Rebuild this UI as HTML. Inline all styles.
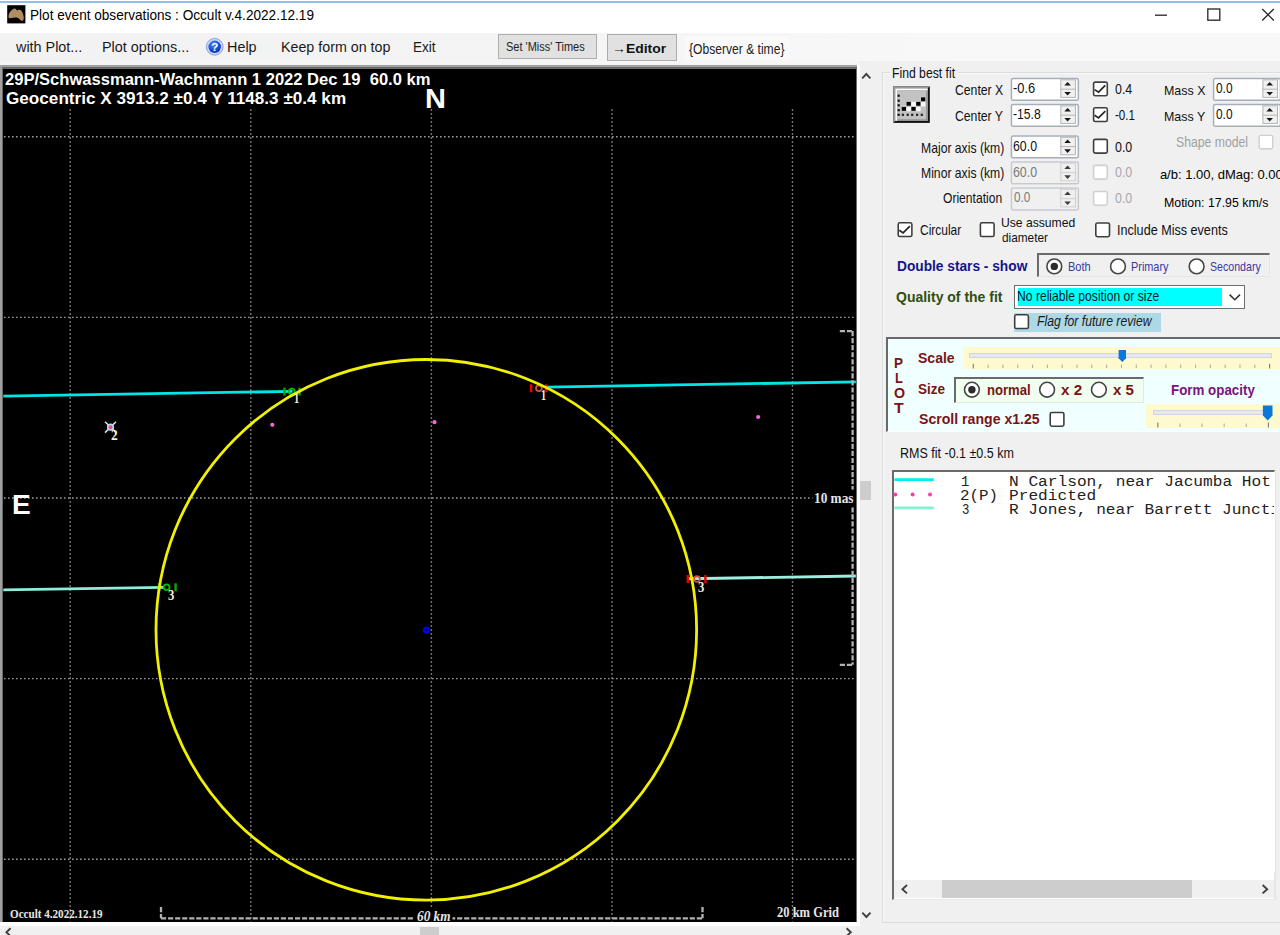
<!DOCTYPE html>
<html lang="en">
<head>
<meta charset="utf-8">
<title>Plot event observations : Occult v.4.2022.12.19</title>
<style>
html,body{margin:0;padding:0;width:1280px;height:935px;overflow:hidden;background:#f0f0f0}
#app{width:1280px;height:935px;overflow:hidden;position:relative;background:#f0f0f0;font-family:"Liberation Sans",sans-serif}
.a{position:absolute;box-sizing:border-box}
.t{position:absolute;white-space:pre;transform-origin:0 0;display:block}
svg{position:absolute;left:0;top:0;overflow:hidden}
.btn{background:#e1e1e1;border:1px solid #adadad}
.spin{background:#fff;border-radius:2px}
.spin.dis{background:#f0f0f0}
.cb{width:15.3px;height:15.3px;background:#fff;border-radius:2px}
.rd{width:15.6px;height:15.6px;border-radius:50%;background:#fff}
.sunk{border-top:2px solid #6a6a6a;border-left:2px solid #6a6a6a;border-right:1px solid #e6e6e6;border-bottom:1px solid #e6e6e6}
</style>
</head>
<body>
<div id="app">
<!-- title bar -->
<div class="a" id="titlebar" style="left:0;top:0;width:1280px;height:33px;background:#fff"></div>
<div class="a" style="left:0;top:1px;width:1280px;height:2px;background:#97bbeb"></div>
<!-- menu bar -->
<div class="a" id="menubar" style="left:0;top:33px;width:1280px;height:28.2px;background:linear-gradient(to right,#f2f2f2 0%,#f4f4f4 40%,#f8f8f8 75%,#f8f8f8 100%)"></div>
<div class="a" style="left:0;top:61.4px;width:859px;height:3.6px;background:#f5f5f5"></div>
<div class="a" style="left:685px;top:36px;width:105px;height:24px;background:#f9f9f9"></div>
<div class="a btn" style="left:498px;top:34.2px;width:98.6px;height:24.4px;border-width:1.3px"></div>
<div class="a btn" style="left:607.4px;top:34.2px;width:69.4px;height:27px;border-width:1.3px"></div>
<!-- plot panel frame -->
<div class="a" id="plotframe" style="left:0;top:65px;width:860px;height:860.5px;background:#fff"></div>
<div class="a" style="left:0;top:65px;width:857px;height:857px;background:#a0a0a0"></div>
<div class="a" style="left:2px;top:67px;width:855px;height:855px;background:#6a6a6a"></div>
<div class="a" style="left:3.3px;top:68.7px;width:852.5px;height:852.9px;background:#000"></div>
<!-- scrollbars of plot -->
<div class="a" style="left:860.3px;top:481.2px;width:11.2px;height:19px;background:#cdcdcd"></div>
<div class="a" style="left:419.5px;top:926.8px;width:19.4px;height:10px;background:#cdcdcd"></div>
<!-- right panel boxes -->
<div class="a" id="groupbox" style="left:882.3px;top:72.2px;width:420px;height:851px;border:1px solid #dcdcdc;box-shadow:inset 1px 1px 0 #f8f8f8"></div>
<div class="a" style="left:890px;top:66px;width:68px;height:14px;background:#f0f0f0"></div>
<!-- spinners -->
<div class="a spin" style="left:1010.7px;top:78px;width:68px;height:22.6px"></div>
<div class="a spin" style="left:1010.7px;top:104px;width:68px;height:22.6px"></div>
<div class="a spin" style="left:1010.7px;top:135.3px;width:68px;height:23px"></div>
<div class="a spin dis" style="left:1010.7px;top:161.3px;width:68px;height:23px"></div>
<div class="a spin dis" style="left:1010.7px;top:187.4px;width:68px;height:23px"></div>
<div class="a spin" style="left:1212.8px;top:78px;width:68px;height:22.6px"></div>
<div class="a spin" style="left:1212.8px;top:104px;width:68px;height:22.6px"></div>
<!-- checkboxes -->
<div class="a cb" style="left:1092.8px;top:81.3px"></div>
<div class="a cb" style="left:1092.8px;top:107px"></div>
<div class="a cb" style="left:1092.8px;top:138.6px"></div>
<div class="a cb dis" style="left:1092.8px;top:164.6px"></div>
<div class="a cb dis" style="left:1092.8px;top:190.7px"></div>
<div class="a cb dis" style="left:1258.3px;top:134.4px"></div>
<div class="a cb" style="left:897.4px;top:222px"></div>
<div class="a cb" style="left:979.6px;top:222px"></div>
<div class="a cb" style="left:1095px;top:222.2px"></div>
<!-- double stars radio group -->
<div class="a sunk" style="left:1036.9px;top:253.1px;width:233.3px;height:24px;background:#f0f0f0"></div>
<div class="a rd on" style="left:1046.5px;top:258.6px"></div>
<div class="a rd" style="left:1110.2px;top:258.6px"></div>
<div class="a rd" style="left:1188.8px;top:258.6px"></div>
<!-- combobox -->
<div class="a" style="left:1013.9px;top:284.7px;width:231.4px;height:24.3px;background:#fff;border:1.2px solid #6e6e6e"></div>
<div class="a" style="left:1017.6px;top:288.4px;width:204.4px;height:17.3px;background:#00ffff"></div>
<!-- flag -->
<div class="a" style="left:1013.9px;top:312.8px;width:146.8px;height:19.7px;background:#add8e6"></div>
<div class="a cb" style="left:1013.9px;top:314px"></div>
<!-- PLOT panel -->
<div class="a" style="left:885.6px;top:337.2px;width:400px;height:95px;background:#f0ffff;border-top:2px solid #6a6a6a;border-left:2px solid #6a6a6a;border-bottom:1.4px solid #fff"></div>
<div class="a" style="left:963.4px;top:346.8px;width:320px;height:22.2px;background:#fffacd"></div>
<div class="a" style="left:969.3px;top:352.9px;width:303.2px;height:4.7px;background:#e6e8f0;border:1px solid #d2d4de"></div>
<div class="a sunk" style="left:953.5px;top:377px;width:190.7px;height:25.6px;background:#f0fff0"></div>
<div class="a rd on" style="left:964.1px;top:381.9px"></div>
<div class="a rd" style="left:1039.3px;top:381.9px"></div>
<div class="a rd" style="left:1091.1px;top:381.9px"></div>
<div class="a" style="left:1145.8px;top:403.5px;width:140px;height:24.3px;background:#fffacd"></div>
<div class="a" style="left:1152.7px;top:410.2px;width:117.5px;height:4.8px;background:#e6e8f0;border:1px solid #d2d4de"></div>
<div class="a cb" style="left:1049.4px;top:411.7px"></div>
<!-- list box -->
<div class="a sunk" id="list" style="left:892.4px;top:469.6px;width:383px;height:430.3px;background:#fff"></div>
<div class="a" style="left:894.4px;top:880.3px;width:380px;height:17.6px;background:#f0f0f0"></div>
<div class="a" style="left:942.2px;top:880.3px;width:250.3px;height:17.6px;background:#cdcdcd"></div>
<svg width="1280" height="935" viewBox="0 0 1280 935">
<defs><clipPath id="pc"><rect x="3.3" y="68.4" width="852.5" height="853.2"/></clipPath><radialGradient id="hg" cx="0.4" cy="0.3" r="0.8"><stop offset="0" stop-color="#5a8cf5"/><stop offset="0.6" stop-color="#1448d8"/><stop offset="1" stop-color="#0a2ca8"/></radialGradient></defs>
<g id="appicon"><rect x="7.2" y="5.2" width="18.2" height="18.2" fill="#050302"/><path d="M8.6 15.5 C8.8 12.5 11 10.5 13.2 9 C14.5 8 15.8 8.4 16.6 10.2 C17.6 10.6 18.2 9.6 19.6 9.8 C21.6 10.2 22.6 12.4 23.2 14.6 C23.8 16.8 24.2 19 23.2 20.4 C22 21 20.8 20.6 19.8 19.4 C18.6 17.8 16.4 17.4 14.4 17.6 C12.4 17.8 10.6 18.6 9.2 18.2 C8.4 17.6 8.5 16.5 8.6 15.5 Z" fill="#b08d62"/></g>
<g stroke="#2b2b2b" stroke-width="1.35" fill="none"><path d="M1155 15.2 H1167"/><rect x="1207.8" y="9" width="12" height="11.2"/><path d="M1262.2 9 L1273.8 20.4 M1273.8 9 L1262.2 20.4"/></g>
<g id="helpicon"><circle cx="214.7" cy="46.8" r="8.4" fill="#c9d6f3" stroke="#8fa3d8" stroke-width="1"/><circle cx="214.7" cy="46.8" r="6.2" fill="url(#hg)"/><text x="214.8" y="51" text-anchor="middle" font-family="Liberation Sans, sans-serif" font-weight="bold" font-size="11.5" fill="#fff">?</text></g>
<g stroke="#404040" stroke-width="1.9" fill="none"><path d="M862.2 78.3 L866.3 74 L870.4 78.3"/><path d="M862.3 912.6 L866.4 917 L870.5 912.6"/><path d="M10.6 928.2 L6.4 932.2 L10.6 936.2"/><path d="M846.6 928.2 L850.8 932.2 L846.6 936.2"/><path d="M907 885 L902.4 889.2 L907 893.4"/><path d="M1262.6 885 L1267.2 889.2 L1262.6 893.4"/></g>
<g clip-path="url(#pc)">
<g stroke="#9a9a9a" stroke-width="1.4" stroke-dasharray="1.6 2.4" fill="none">
<path d="M70.2 109.2 V922"/>
<path d="M250.8 109.2 V922"/>
<path d="M431.4 109.2 V922"/>
<path d="M612.0 109.2 V922"/>
<path d="M792.5 109.2 V922"/>
<path d="M4 136.8 H856"/>
<path d="M4 317.4 H856"/>
<path d="M4 498.0 H856"/>
<path d="M4 678.6 H856"/>
<path d="M4 859.2 H856"/>
</g>
<g fill="none" stroke-width="2.8">
<path d="M3 396.20 L292.5 391.35" stroke="#00e6e6"/>
<path d="M546.5 387.09 L857 381.89" stroke="#00e6e6"/>
<path d="M3 589.90 L164 587.28" stroke="#8eecd8"/>
<path d="M688 578.73 L857 575.98" stroke="#9eeee0"/>
</g>
<g fill="none" stroke="#10a010" stroke-width="2.4"><path d="M284.5 387.6 V395.6"/><path d="M299.5 387.6 V395.6"/><circle cx="291.8" cy="391.6" r="2.9" stroke="#00c000" stroke-width="1.8"/></g>
<g fill="none" stroke="#f00000" stroke-width="2.4"><path d="M531.2 384.2 V392.2"/><path d="M546.3 384.2 V392.2"/><circle cx="538.9" cy="388.2" r="2.9" stroke="#d05040" stroke-width="1.8"/></g>
<g fill="none" stroke="#10a010" stroke-width="2.4"><path d="M159.0 583.2 V591.2"/><path d="M175.6 583.2 V591.2"/><circle cx="166.6" cy="587.2" r="2.9" stroke="#00c000" stroke-width="1.8"/></g>
<g fill="none" stroke="#f00000" stroke-width="2.4"><path d="M687.8 575.0 V583.0"/><path d="M705.4 575.0 V583.0"/><circle cx="697.0" cy="579.0" r="2.9" stroke="#d05040" stroke-width="1.8"/></g>
<circle cx="426.3" cy="629.8" r="270.3" fill="none" stroke="#f0f000" stroke-width="2.8"/>
<circle cx="272.3" cy="424.8" r="2.1" fill="#f068d0"/>
<circle cx="434.5" cy="422.2" r="2.1" fill="#f068d0"/>
<circle cx="758.2" cy="417.0" r="2.1" fill="#f068d0"/>
<g stroke="#cfe6f0" stroke-width="1.5" fill="none"><path d="M105 421.8 L116 432.6 M116 421.8 L105 432.6"/><circle cx="110.5" cy="427.2" r="3.6" fill="#b8d8e8" stroke="none"/></g>
<circle cx="110.5" cy="427.2" r="1.9" fill="#ff3c96"/>
<circle cx="426.3" cy="630.1" r="2.4" fill="#000050" stroke="#0000f4" stroke-width="2.3"/>
<g stroke="#b2b2b2" stroke-width="2.3" fill="none" stroke-dasharray="5.2 1.85">
<path d="M839.8 331.2 H853.8"/><path d="M852.6 331 V664.8"/><path d="M839.8 664.8 H853.8"/>
<path d="M161 907 V918.2"/><path d="M161 918.3 H702.5"/><path d="M702.5 907 V918.2"/>
</g>
<rect x="812.5" y="489.6" width="44" height="17.6" fill="#000"/><rect x="414.5" y="908.5" width="38" height="14" fill="#000"/>
</g>
<g id="fitbtn"><rect x="893.2" y="86.3" width="36.6" height="36.6" fill="#111"/><path d="M893.2 86.3 H929.8000000000001 L927.8000000000001 88.3 H895.2 V120.9 L893.2 122.9 Z" fill="#9a9a9a"/><rect x="895.2" y="88.3" width="32.6" height="32.6" fill="#fff"/><rect x="897.2" y="90.3" width="30.6" height="30.6" fill="#8a8a8a"/><rect x="897.2" y="90.3" width="29.1" height="29.1" fill="#c2c2c2"/>
<rect x="906.6" y="107.0" width="4.4" height="4.2" fill="#fafafa"/>
<rect x="911.4" y="101.89999999999999" width="4.4" height="4.2" fill="#fafafa"/>
<rect x="916.2" y="107.0" width="4.4" height="4.2" fill="#fafafa"/>
<rect x="921.0" y="102.19999999999999" width="4.4" height="4.2" fill="#fafafa"/>
<rect x="897.6" y="94.60000000000001" width="2.2" height="2.2" fill="#111"/>
<rect x="897.6" y="99.60000000000001" width="2.2" height="2.2" fill="#111"/>
<rect x="897.6" y="104.2" width="2.2" height="2.2" fill="#111"/>
<rect x="897.6" y="109.1" width="2.2" height="2.2" fill="#111"/>
<rect x="897.6" y="113.7" width="2.2" height="2.2" fill="#111"/>
<rect x="901.8000000000001" y="113.69999999999999" width="2.2" height="2.2" fill="#222"/>
<rect x="906.6" y="113.69999999999999" width="2.2" height="2.2" fill="#222"/>
<rect x="911.1" y="113.69999999999999" width="2.2" height="2.2" fill="#222"/>
<rect x="916.0" y="113.69999999999999" width="2.2" height="2.2" fill="#222"/>
<rect x="920.7" y="113.69999999999999" width="2.2" height="2.2" fill="#222"/>
<rect x="901.8000000000001" y="107.0" width="4.2" height="3.8" fill="#000"/>
<rect x="906.6" y="101.89999999999999" width="4.2" height="3.8" fill="#000"/>
<rect x="911.4" y="107.0" width="4.2" height="3.8" fill="#000"/>
<rect x="916.2" y="101.89999999999999" width="4.2" height="3.8" fill="#000"/>
<rect x="921.0" y="97.39999999999999" width="4.2" height="3.8" fill="#000"/>
</g>
<rect x="1011.45" y="78.55" width="66.90" height="21.80" rx="1.6" fill="#fff" stroke="#a6aebb" stroke-width="1.5"/>
<rect x="1060.80" y="79.80" width="14.60" height="17.60" fill="#f0f0f0" stroke="#b4b4b4" stroke-width="1"/>
<path d="M1060.30 89.20 H1075.90" stroke="#b4b4b4" stroke-width="1"/>
<path d="M1064.30 85.60 L1067.60 82.00 L1070.90 85.60 Z" fill="#161616"/>
<path d="M1064.30 91.90 L1067.60 95.50 L1070.90 91.90 Z" fill="#161616"/>
<rect x="1011.45" y="104.55" width="66.90" height="21.80" rx="1.6" fill="#fff" stroke="#a6aebb" stroke-width="1.5"/>
<rect x="1060.80" y="105.80" width="14.60" height="17.60" fill="#f0f0f0" stroke="#b4b4b4" stroke-width="1"/>
<path d="M1060.30 115.20 H1075.90" stroke="#b4b4b4" stroke-width="1"/>
<path d="M1064.30 111.60 L1067.60 108.00 L1070.90 111.60 Z" fill="#161616"/>
<path d="M1064.30 117.90 L1067.60 121.50 L1070.90 117.90 Z" fill="#161616"/>
<rect x="1011.45" y="135.95" width="66.90" height="21.90" rx="1.6" fill="#fff" stroke="#a6aebb" stroke-width="1.5"/>
<rect x="1060.80" y="137.20" width="14.60" height="17.60" fill="#f0f0f0" stroke="#b4b4b4" stroke-width="1"/>
<path d="M1060.30 146.60 H1075.90" stroke="#b4b4b4" stroke-width="1"/>
<path d="M1064.30 143.00 L1067.60 139.40 L1070.90 143.00 Z" fill="#161616"/>
<path d="M1064.30 149.30 L1067.60 152.90 L1070.90 149.30 Z" fill="#161616"/>
<rect x="1011.45" y="161.95" width="66.90" height="21.90" rx="1.6" fill="#f0f0f0" stroke="#c6cad0" stroke-width="1.5"/>
<rect x="1060.80" y="163.20" width="14.60" height="17.60" fill="#f0f0f0" stroke="#cfcfcf" stroke-width="1"/>
<path d="M1060.30 172.60 H1075.90" stroke="#cfcfcf" stroke-width="1"/>
<path d="M1064.30 169.00 L1067.60 165.40 L1070.90 169.00 Z" fill="#3c3c3c"/>
<path d="M1064.30 175.30 L1067.60 178.90 L1070.90 175.30 Z" fill="#3c3c3c"/>
<rect x="1011.45" y="188.05" width="66.90" height="21.90" rx="1.6" fill="#f0f0f0" stroke="#c6cad0" stroke-width="1.5"/>
<rect x="1060.80" y="189.30" width="14.60" height="17.60" fill="#f0f0f0" stroke="#cfcfcf" stroke-width="1"/>
<path d="M1060.30 198.70 H1075.90" stroke="#cfcfcf" stroke-width="1"/>
<path d="M1064.30 195.10 L1067.60 191.50 L1070.90 195.10 Z" fill="#3c3c3c"/>
<path d="M1064.30 201.40 L1067.60 205.00 L1070.90 201.40 Z" fill="#3c3c3c"/>
<rect x="1213.55" y="78.55" width="66.90" height="21.80" rx="1.6" fill="#fff" stroke="#a6aebb" stroke-width="1.5"/>
<rect x="1262.90" y="79.80" width="14.60" height="17.60" fill="#f0f0f0" stroke="#b4b4b4" stroke-width="1"/>
<path d="M1262.40 89.20 H1278.00" stroke="#b4b4b4" stroke-width="1"/>
<path d="M1266.40 85.60 L1269.70 82.00 L1273.00 85.60 Z" fill="#161616"/>
<path d="M1266.40 91.90 L1269.70 95.50 L1273.00 91.90 Z" fill="#161616"/>
<rect x="1213.55" y="104.55" width="66.90" height="21.80" rx="1.6" fill="#fff" stroke="#a6aebb" stroke-width="1.5"/>
<rect x="1262.90" y="105.80" width="14.60" height="17.60" fill="#f0f0f0" stroke="#b4b4b4" stroke-width="1"/>
<path d="M1262.40 115.20 H1278.00" stroke="#b4b4b4" stroke-width="1"/>
<path d="M1266.40 111.60 L1269.70 108.00 L1273.00 111.60 Z" fill="#161616"/>
<path d="M1266.40 117.90 L1269.70 121.50 L1273.00 117.90 Z" fill="#161616"/>
<rect x="1093.60" y="82.10" width="13.7" height="13.7" rx="1.6" fill="#fff" stroke="#3e3e3e" stroke-width="1.6"/>
<path d="M1094.7 89.6 L1098.5 92.2 L1105.3 85.4" fill="none" stroke="#262626" stroke-width="1.7"/>
<rect x="1093.60" y="107.80" width="13.7" height="13.7" rx="1.6" fill="#fff" stroke="#3e3e3e" stroke-width="1.6"/>
<path d="M1094.7 115.3 L1098.5 117.9 L1105.3 111.1" fill="none" stroke="#262626" stroke-width="1.7"/>
<rect x="1093.60" y="139.40" width="13.7" height="13.7" rx="1.6" fill="#fff" stroke="#3e3e3e" stroke-width="1.6"/>
<rect x="1093.60" y="165.40" width="13.7" height="13.7" rx="1.6" fill="#fff" stroke="#d0d0d0" stroke-width="1.6"/>
<rect x="1093.60" y="191.50" width="13.7" height="13.7" rx="1.6" fill="#fff" stroke="#d0d0d0" stroke-width="1.6"/>
<rect x="1259.10" y="135.20" width="13.7" height="13.7" rx="1.6" fill="#fff" stroke="#d0d0d0" stroke-width="1.6"/>
<rect x="898.20" y="222.80" width="13.7" height="13.7" rx="1.6" fill="#fff" stroke="#3e3e3e" stroke-width="1.6"/>
<path d="M899.3 230.3 L903.1 232.9 L909.9 226.1" fill="none" stroke="#262626" stroke-width="1.7"/>
<rect x="980.40" y="222.80" width="13.7" height="13.7" rx="1.6" fill="#fff" stroke="#3e3e3e" stroke-width="1.6"/>
<rect x="1095.80" y="223.00" width="13.7" height="13.7" rx="1.6" fill="#fff" stroke="#3e3e3e" stroke-width="1.6"/>
<rect x="1014.70" y="314.80" width="13.7" height="13.7" rx="1.6" fill="#fff" stroke="#3e3e3e" stroke-width="1.6"/>
<rect x="1050.20" y="412.50" width="13.7" height="13.7" rx="1.6" fill="#fff" stroke="#3e3e3e" stroke-width="1.6"/>
<circle cx="1054.3" cy="266.4" r="7.4" fill="#fff" stroke="#454545" stroke-width="1.6"/>
<circle cx="1054.3" cy="266.4" r="3.7" fill="#2c2c2c"/>
<circle cx="1118.0" cy="266.4" r="7.4" fill="#fff" stroke="#454545" stroke-width="1.6"/>
<circle cx="1196.6" cy="266.4" r="7.4" fill="#fff" stroke="#454545" stroke-width="1.6"/>
<circle cx="971.9" cy="389.7" r="7.4" fill="#fff" stroke="#454545" stroke-width="1.6"/>
<circle cx="971.9" cy="389.7" r="3.7" fill="#2c2c2c"/>
<circle cx="1047.1" cy="389.7" r="7.4" fill="#fff" stroke="#454545" stroke-width="1.6"/>
<circle cx="1098.9" cy="389.7" r="7.4" fill="#fff" stroke="#454545" stroke-width="1.6"/>
<path d="M1229.6 294.6 L1234.8 299.8 L1240 294.6" fill="none" stroke="#333" stroke-width="1.5"/>
<g stroke="#b4b09c" stroke-width="1.1">
<path d="M973.30 363.8 V368.6" stroke="#7a7a7a"/>
<path d="M988.12 364.6 V368"/>
<path d="M1002.93 364.6 V368"/>
<path d="M1017.75 364.6 V368"/>
<path d="M1032.56 364.6 V368"/>
<path d="M1047.38 364.6 V368"/>
<path d="M1062.19 364.6 V368"/>
<path d="M1077.00 364.6 V368"/>
<path d="M1091.82 364.6 V368"/>
<path d="M1106.63 364.6 V368"/>
<path d="M1121.45 364.6 V368"/>
<path d="M1136.26 364.6 V368"/>
<path d="M1151.08 364.6 V368"/>
<path d="M1165.89 364.6 V368"/>
<path d="M1180.71 364.6 V368"/>
<path d="M1195.52 364.6 V368"/>
<path d="M1210.34 364.6 V368"/>
<path d="M1225.15 364.6 V368"/>
<path d="M1239.97 364.6 V368"/>
<path d="M1254.78 364.6 V368"/>
<path d="M1269.60 363.8 V368.6" stroke="#7a7a7a"/>
<path d="M1157.80 422.6 V427.6" stroke="#7a7a7a"/>
<path d="M1179.92 423.4 V427"/>
<path d="M1202.04 423.4 V427"/>
<path d="M1224.16 423.4 V427"/>
<path d="M1246.28 423.4 V427"/>
<path d="M1268.40 422.6 V427.6" stroke="#7a7a7a"/>
</g>
<path d="M1118.6 350 H1126 V358.2 L1122.3 361.9 L1118.6 358.2 Z" fill="#0a78d8"/>
<path d="M1262.9 405.4 H1272.5 V415.5 L1267.7 420.4 L1262.9 415.5 Z" fill="#0a78d8"/>
<path d="M894.4 479.7 H933.8" stroke="#00f0f0" stroke-width="2.7"/>
<path d="M894.4 507.9 H933.8" stroke="#7ff4d0" stroke-width="2.7"/>
<circle cx="895.3" cy="494.4" r="2" fill="#ff38b0"/>
<circle cx="912.6" cy="494.4" r="2" fill="#ff38b0"/>
<circle cx="930.0" cy="494.4" r="2" fill="#ff38b0"/>
</svg>
<span class="t" style="left:30.47px;top:7.20px;font:normal normal 14.6px/normal &quot;Liberation Sans&quot;, sans-serif;color:#000;transform:scaleX(0.9317);">Plot event observations : Occult v.4.2022.12.19</span>
<span class="t" style="left:15.69px;top:38.70px;font:normal normal 14.6px/normal &quot;Liberation Sans&quot;, sans-serif;color:#1a1a1a;transform:scaleX(0.9857);">with Plot...</span>
<span class="t" style="left:102.41px;top:38.70px;font:normal normal 14.6px/normal &quot;Liberation Sans&quot;, sans-serif;color:#1a1a1a;transform:scaleX(0.9853);">Plot options...</span>
<span class="t" style="left:227.31px;top:38.70px;font:normal normal 14.6px/normal &quot;Liberation Sans&quot;, sans-serif;color:#1a1a1a;transform:scaleX(0.9862);">Help</span>
<span class="t" style="left:281.22px;top:38.70px;font:normal normal 14.6px/normal &quot;Liberation Sans&quot;, sans-serif;color:#1a1a1a;transform:scaleX(0.9771);">Keep form on top</span>
<span class="t" style="left:412.97px;top:38.70px;font:normal normal 14.6px/normal &quot;Liberation Sans&quot;, sans-serif;color:#1a1a1a;transform:scaleX(0.9281);">Exit</span>
<span class="t" style="left:506.40px;top:39.60px;font:normal normal 12px/normal &quot;Liberation Sans&quot;, sans-serif;color:#222;transform:scaleX(0.9159);">Set &#x27;Miss&#x27; Times</span>
<span class="t" style="left:612.45px;top:40.60px;font:normal bold 13.6px/normal &quot;Liberation Sans&quot;, sans-serif;color:#111;transform:scaleX(1.0238);">→Editor</span>
<span class="t" style="left:689.00px;top:41.80px;font:normal normal 13.8px/normal &quot;Liberation Sans&quot;, sans-serif;color:#222;transform:scaleX(0.8767);">{Observer &amp; time}</span>
<span class="t" style="left:5.30px;top:70.60px;font:normal bold 16px/normal &quot;Liberation Sans&quot;, sans-serif;color:#fff;transform:scaleX(1.0347);">29P/Schwassmann-Wachmann 1 2022 Dec 19  60.0 km</span>
<span class="t" style="left:5.50px;top:89.50px;font:normal bold 16px/normal &quot;Liberation Sans&quot;, sans-serif;color:#fff;transform:scaleX(1.0708);">Geocentric X 3913.2 ±0.4 Y 1148.3 ±0.4 km</span>
<span class="t" style="left:425.45px;top:83.20px;font:normal bold 27.6px/normal &quot;Liberation Sans&quot;, sans-serif;color:#fff;transform:scaleX(1.0500);">N</span>
<span class="t" style="left:11.88px;top:489.00px;font:normal bold 27.6px/normal &quot;Liberation Sans&quot;, sans-serif;color:#fff;transform:scaleX(1.0176);">E</span>
<span class="t" style="left:294.28px;top:390.40px;font:normal bold 14.5px/normal &quot;Liberation Serif&quot;, serif;color:#f4f0d8;transform:scaleX(0.7167);">1</span>
<span class="t" style="left:540.90px;top:387.40px;font:normal bold 14.5px/normal &quot;Liberation Serif&quot;, serif;color:#f4f0d8;transform:scaleX(0.7000);">1</span>
<span class="t" style="left:111.30px;top:427.40px;font:normal bold 14.5px/normal &quot;Liberation Serif&quot;, serif;color:#f4f0d8;transform:scaleX(0.9286);">2</span>
<span class="t" style="left:167.80px;top:587.40px;font:normal bold 14.5px/normal &quot;Liberation Serif&quot;, serif;color:#f4f0d8;transform:scaleX(0.8714);">3</span>
<span class="t" style="left:697.80px;top:579.00px;font:normal bold 14.5px/normal &quot;Liberation Serif&quot;, serif;color:#f4f0d8;transform:scaleX(0.8714);">3</span>
<span class="t" style="left:10.10px;top:906.00px;font:normal bold 13.2px/normal &quot;Liberation Serif&quot;, serif;color:#e6e6e6;transform:scaleX(0.8423);">Occult 4.2022.12.19</span>
<span class="t" style="left:416.80px;top:908.30px;font:italic bold 14.6px/normal &quot;Liberation Serif&quot;, serif;color:#e6e6e6;transform:scaleX(0.9086);">60 km</span>
<span class="t" style="left:776.60px;top:903.80px;font:normal bold 14.2px/normal &quot;Liberation Serif&quot;, serif;color:#e6e6e6;transform:scaleX(0.8824);">20 km Grid</span>
<span class="t" style="left:813.79px;top:490.20px;font:normal bold 14.6px/normal &quot;Liberation Serif&quot;, serif;color:#e6e6e6;transform:scaleX(0.9111);">10 mas</span>
<span class="t" style="left:892.16px;top:64.50px;font:normal normal 14.5px/normal &quot;Liberation Sans&quot;, sans-serif;color:#111;transform:scaleX(0.8414);">Find best fit</span>
<span class="t" style="left:954.80px;top:82.00px;font:normal normal 14.5px/normal &quot;Liberation Sans&quot;, sans-serif;color:#111;transform:scaleX(0.8427);">Center X</span>
<span class="t" style="left:954.80px;top:108.00px;font:normal normal 14.5px/normal &quot;Liberation Sans&quot;, sans-serif;color:#111;transform:scaleX(0.8427);">Center Y</span>
<span class="t" style="left:920.76px;top:139.70px;font:normal normal 14.5px/normal &quot;Liberation Sans&quot;, sans-serif;color:#111;transform:scaleX(0.8400);">Major axis (km)</span>
<span class="t" style="left:920.76px;top:165.40px;font:normal normal 14.5px/normal &quot;Liberation Sans&quot;, sans-serif;color:#111;transform:scaleX(0.8400);">Minor axis (km)</span>
<span class="t" style="left:942.70px;top:189.80px;font:normal normal 14.5px/normal &quot;Liberation Sans&quot;, sans-serif;color:#111;transform:scaleX(0.8340);">Orientation</span>
<span class="t" style="left:1012.50px;top:79.90px;font:normal normal 14.5px/normal &quot;Liberation Sans&quot;, sans-serif;color:#111;transform:scaleX(0.8868);">-0.6</span>
<span class="t" style="left:1012.50px;top:105.90px;font:normal normal 14.5px/normal &quot;Liberation Sans&quot;, sans-serif;color:#111;transform:scaleX(0.8398);">-15.8</span>
<span class="t" style="left:1013.00px;top:137.60px;font:normal normal 14.5px/normal &quot;Liberation Sans&quot;, sans-serif;color:#111;transform:scaleX(0.8524);">60.0</span>
<span class="t" style="left:1013.00px;top:163.50px;font:normal normal 14.5px/normal &quot;Liberation Sans&quot;, sans-serif;color:#7a7a7a;transform:scaleX(0.8524);">60.0</span>
<span class="t" style="left:1013.60px;top:189.00px;font:normal normal 14.5px/normal &quot;Liberation Sans&quot;, sans-serif;color:#7a7a7a;transform:scaleX(0.8063);">0.0</span>
<span class="t" style="left:1115.20px;top:81.00px;font:normal normal 14.5px/normal &quot;Liberation Sans&quot;, sans-serif;color:#111;transform:scaleX(0.8560);">0.4</span>
<span class="t" style="left:1115.20px;top:106.90px;font:normal normal 14.5px/normal &quot;Liberation Sans&quot;, sans-serif;color:#111;transform:scaleX(0.7985);">-0.1</span>
<span class="t" style="left:1115.20px;top:138.70px;font:normal normal 14.5px/normal &quot;Liberation Sans&quot;, sans-serif;color:#111;transform:scaleX(0.8560);">0.0</span>
<span class="t" style="left:1115.20px;top:164.40px;font:normal normal 14.5px/normal &quot;Liberation Sans&quot;, sans-serif;color:#a8a8a8;transform:scaleX(0.8560);">0.0</span>
<span class="t" style="left:1115.20px;top:190.20px;font:normal normal 14.5px/normal &quot;Liberation Sans&quot;, sans-serif;color:#a8a8a8;transform:scaleX(0.8560);">0.0</span>
<span class="t" style="left:1163.94px;top:83.00px;font:normal normal 13px/normal &quot;Liberation Sans&quot;, sans-serif;color:#111;transform:scaleX(0.9562);">Mass X</span>
<span class="t" style="left:1163.94px;top:109.00px;font:normal normal 13px/normal &quot;Liberation Sans&quot;, sans-serif;color:#111;transform:scaleX(0.9562);">Mass Y</span>
<span class="t" style="left:1215.70px;top:79.90px;font:normal normal 14.5px/normal &quot;Liberation Sans&quot;, sans-serif;color:#111;transform:scaleX(0.8212);">0.0</span>
<span class="t" style="left:1215.70px;top:105.90px;font:normal normal 14.5px/normal &quot;Liberation Sans&quot;, sans-serif;color:#111;transform:scaleX(0.8212);">0.0</span>
<span class="t" style="left:1176.40px;top:133.60px;font:normal normal 14.5px/normal &quot;Liberation Sans&quot;, sans-serif;color:#a0a0a0;transform:scaleX(0.8424);">Shape model</span>
<span class="t" style="left:1159.90px;top:166.70px;font:normal normal 13px/normal &quot;Liberation Sans&quot;, sans-serif;color:#000;">a/b: 1.00, dMag: 0.00</span>
<span class="t" style="left:1163.95px;top:195.20px;font:normal normal 13px/normal &quot;Liberation Sans&quot;, sans-serif;color:#000;transform:scaleX(0.9504);">Motion: 17.95 km/s</span>
<span class="t" style="left:919.50px;top:221.70px;font:normal normal 14.5px/normal &quot;Liberation Sans&quot;, sans-serif;color:#111;transform:scaleX(0.8240);">Circular</span>
<span class="t" style="left:1001.47px;top:214.70px;font:normal normal 13px/normal &quot;Liberation Sans&quot;, sans-serif;color:#111;transform:scaleX(0.9342);">Use assumed</span>
<span class="t" style="left:1002.40px;top:230.20px;font:normal normal 13px/normal &quot;Liberation Sans&quot;, sans-serif;color:#111;transform:scaleX(0.9093);">diameter</span>
<span class="t" style="left:1116.53px;top:221.70px;font:normal normal 14.5px/normal &quot;Liberation Sans&quot;, sans-serif;color:#111;transform:scaleX(0.8693);">Include Miss events</span>
<span class="t" style="left:897.00px;top:258.20px;font:normal bold 14px/normal &quot;Liberation Sans&quot;, sans-serif;color:#14148c;transform:scaleX(0.9795);">Double stars - show</span>
<span class="t" style="left:1067.71px;top:260.00px;font:normal normal 12.4px/normal &quot;Liberation Sans&quot;, sans-serif;color:#3a3aa0;transform:scaleX(0.8903);">Both</span>
<span class="t" style="left:1130.62px;top:260.00px;font:normal normal 12.4px/normal &quot;Liberation Sans&quot;, sans-serif;color:#3a3aa0;transform:scaleX(0.8780);">Primary</span>
<span class="t" style="left:1210.40px;top:260.00px;font:normal normal 12.4px/normal &quot;Liberation Sans&quot;, sans-serif;color:#3a3aa0;transform:scaleX(0.8561);">Secondary</span>
<span class="t" style="left:895.90px;top:288.70px;font:normal bold 14.5px/normal &quot;Liberation Sans&quot;, sans-serif;color:#2f4f0f;transform:scaleX(0.9645);">Quality of the fit</span>
<span class="t" style="left:1016.96px;top:287.70px;font:normal normal 14.5px/normal &quot;Liberation Sans&quot;, sans-serif;color:#002020;transform:scaleX(0.8367);">No reliable position or size</span>
<span class="t" style="left:1037.40px;top:312.60px;font:italic normal 14.5px/normal &quot;Liberation Sans&quot;, sans-serif;color:#1a1a1a;transform:scaleX(0.8416);">Flag for future review</span>
<span class="t" style="left:894.30px;top:354.70px;font:normal bold 14.5px/normal &quot;Liberation Sans&quot;, sans-serif;color:#7a1414;transform:scaleX(0.9300);">P</span>
<span class="t" style="left:895.00px;top:369.90px;font:normal bold 14.5px/normal &quot;Liberation Sans&quot;, sans-serif;color:#7a1414;transform:scaleX(0.8889);">L</span>
<span class="t" style="left:893.80px;top:385.20px;font:normal bold 14.5px/normal &quot;Liberation Sans&quot;, sans-serif;color:#7a1414;transform:scaleX(0.9818);">O</span>
<span class="t" style="left:894.20px;top:400.40px;font:normal bold 14.5px/normal &quot;Liberation Sans&quot;, sans-serif;color:#7a1414;transform:scaleX(1.0889);">T</span>
<span class="t" style="left:918.20px;top:349.90px;font:normal bold 14.5px/normal &quot;Liberation Sans&quot;, sans-serif;color:#7a1414;transform:scaleX(0.9675);">Scale</span>
<span class="t" style="left:918.20px;top:380.70px;font:normal bold 14.5px/normal &quot;Liberation Sans&quot;, sans-serif;color:#7a1414;transform:scaleX(0.9326);">Size</span>
<span class="t" style="left:919.20px;top:410.80px;font:normal bold 14.5px/normal &quot;Liberation Sans&quot;, sans-serif;color:#7a1414;transform:scaleX(0.9721);">Scroll range x1.25</span>
<span class="t" style="left:986.50px;top:381.60px;font:normal bold 14px/normal &quot;Liberation Sans&quot;, sans-serif;color:#7a1414;transform:scaleX(0.9348);">normal</span>
<span class="t" style="left:1061.40px;top:381.60px;font:normal bold 14px/normal &quot;Liberation Sans&quot;, sans-serif;color:#7a1414;transform:scaleX(1.0876);">x 2</span>
<span class="t" style="left:1113.10px;top:381.60px;font:normal bold 14px/normal &quot;Liberation Sans&quot;, sans-serif;color:#7a1414;transform:scaleX(1.0775);">x 5</span>
<span class="t" style="left:1170.80px;top:382.00px;font:normal bold 14.5px/normal &quot;Liberation Sans&quot;, sans-serif;color:#7a147a;transform:scaleX(0.9211);">Form opacity</span>
<span class="t" style="left:900.44px;top:445.40px;font:normal normal 14.6px/normal &quot;Liberation Sans&quot;, sans-serif;color:#111;transform:scaleX(0.8570);">RMS fit -0.1 ±0.5 km</span>
<span class="t" style="left:960.59px;top:472.50px;font:normal normal 15.2px/normal &quot;Liberation Mono&quot;, monospace;color:#222;transform:scaleX(0.9125);">1</span>
<span class="t" style="left:1008.84px;top:472.50px;font:normal normal 15.2px/normal &quot;Liberation Mono&quot;, monospace;color:#222;transform:scaleX(1.0645);">N Carlson, near Jacumba Hot</span>
<span class="t" style="left:960.46px;top:486.70px;font:normal normal 15.2px/normal &quot;Liberation Mono&quot;, monospace;color:#222;transform:scaleX(1.0407);">2(P)</span>
<span class="t" style="left:1009.44px;top:486.70px;font:normal normal 15.2px/normal &quot;Liberation Mono&quot;, monospace;color:#222;transform:scaleX(1.0637);">Predicted</span>
<span class="t" style="left:961.50px;top:500.50px;font:normal normal 15.2px/normal &quot;Liberation Mono&quot;, monospace;color:#222;transform:scaleX(0.8111);">3</span>
<span class="t" style="left:1009.14px;top:500.50px;font:normal normal 15.2px/normal &quot;Liberation Mono&quot;, monospace;color:#222;transform:scaleX(1.0623);">R Jones, near Barrett Junction</span>
<div class="a" style="left:1274.4px;top:472px;width:6px;height:400px;background:#fff"></div>
<div class="a" style="left:1275.4px;top:470px;width:5px;height:430px;background:#f0f0f0;border-left:1px solid #e6e6e6"></div>
</div>
</body>
</html>
